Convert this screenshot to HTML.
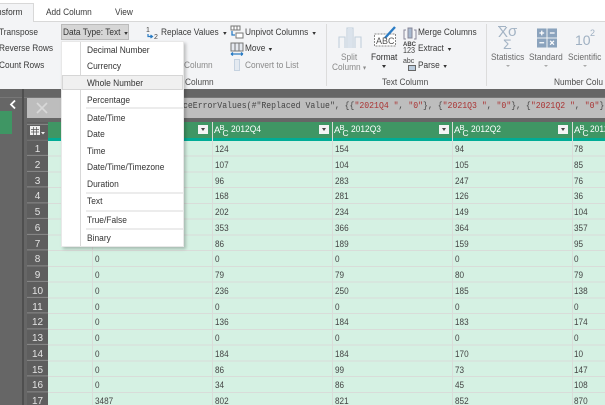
<!DOCTYPE html>
<html><head><meta charset="utf-8"><style>
html,body{margin:0;padding:0;overflow:hidden}
body{width:605px;height:405px;position:relative;background:#fff;font-family:"Liberation Sans",sans-serif;font-size:9.5px;color:#3a3a3a}
#w{position:absolute;left:0;top:0;width:605px;height:405px;overflow:hidden;filter:blur(.3px);background:#fff}
.a{position:absolute;white-space:nowrap}
.t{transform:scaleX(.875);transform-origin:left center}
.col{position:absolute;top:142px;line-height:15.75px;font-size:9.5px;color:#444;transform:scaleX(.86);transform-origin:left top}
.m{position:absolute;left:87px;font-size:9.5px;color:#333;white-space:nowrap;transform:scaleX(.885);transform-origin:left center}
.sep{position:absolute;left:86px;width:97px;height:2px;background:#ececec}
.hd{position:absolute;top:124px;color:#fff;font-size:9.5px;white-space:nowrap;transform:scaleX(.885);transform-origin:left center}
.dd{position:absolute;top:125px;width:10px;height:9px;background:#f4f4f4}
.dd:after{content:"";position:absolute;left:2.5px;top:3px;border:2.5px solid transparent;border-top:3px solid #444}
.ab{position:absolute;top:122px;width:14px;height:16px;color:#fff}
.ab i,.ab b,.ab u{position:absolute;font-style:normal;font-weight:400;text-decoration:none;line-height:10px}
.ab i{left:0;top:4px;font-size:9.5px}
.ab b{left:5.5px;top:0.5px;font-size:7.5px}
.ab u{left:8.5px;top:5.5px;font-size:8.5px}
.tri{display:inline-block;border:2.5px solid transparent;border-top:3px solid #333;margin-left:4px;vertical-align:-2px}
</style></head><body><div id="w">
<!-- ribbon -->
<div class="a" style="left:0;top:21px;width:605px;height:68px;background:#f3f4f6;border-top:1px solid #d8d8d8;box-sizing:border-box"></div>
<div class="a" style="left:0;top:3px;width:34px;height:19px;background:#f3f4f6;border:1px solid #d8d8d8;border-left:0;border-bottom:0;box-sizing:border-box"></div>
<div class="a t" style="left:-3px;top:7px;color:#333">nsform</div>
<div class="a t" style="left:46px;top:7px">Add Column</div>
<div class="a t" style="left:115px;top:7px">View</div>

<div class="a t" style="left:-1px;top:27px">Transpose</div>
<div class="a t" style="left:-1px;top:43px">Reverse Rows</div>
<div class="a t" style="left:-1px;top:60px">Count Rows</div>

<div class="a" style="left:61px;top:24px;width:68px;height:16px;background:#d6d6d6;border:1px solid #bbb;box-sizing:border-box"></div>
<div class="a t" style="left:63px;top:27px;color:#333">Data Type: Text<span class="tri"></span></div>

<svg class="a" style="left:146px;top:25px" width="14" height="15" viewBox="0 0 14 15"><text x="0" y="7" font-size="7" fill="#444" font-family="Liberation Sans">1</text><text x="8" y="14" font-size="7" fill="#444" font-family="Liberation Sans">2</text><path d="M2 9v2.5h4M4.5 10l2 1.5-2 1.5" fill="none" stroke="#2b7cc4" stroke-width="1.2"/></svg>
<div class="a t" style="left:161px;top:27px">Replace Values<span class="tri" style="margin-left:5px"></span></div>
<svg class="a" style="left:230px;top:25px" width="14" height="14" viewBox="0 0 14 14"><rect x="1" y="1" width="9" height="4" fill="#fff" stroke="#777"/><path d="M4 1v4M7 1v4" stroke="#777"/><rect x="6" y="8" width="7" height="5" fill="#fff" stroke="#777"/><path d="M2 6v4h3" fill="none" stroke="#2b7cc4" stroke-width="1.3"/></svg>
<div class="a t" style="left:245px;top:27px">Unpivot Columns<span class="tri" style="margin-left:5px"></span></div>
<svg class="a" style="left:230px;top:42px" width="14" height="14" viewBox="0 0 14 14"><path d="M1 1h4v8H1zM9 1h4v8H9zM5 1h4v8H5z" fill="#e6eaf0" stroke="#777"/><path d="M1 12h12M1 12l2-1.5M1 12l2 1.5M13 12l-2-1.5M13 12l-2 1.5" stroke="#2b7cc4" stroke-width="1.2" fill="none"/></svg>
<div class="a t" style="left:245px;top:43px">Move<span class="tri"></span></div>
<div class="a" style="left:234px;top:59px;width:6px;height:12px;border:1px solid #c5d2e0;background:#e4eaf1;box-sizing:border-box"></div>
<div class="a t" style="left:245px;top:60px;color:#8a8a8a">Convert to List</div>
<div class="a t" style="left:184px;top:60px;color:#8a8a8a">Column</div>
<div class="a t" style="left:185px;top:77px;color:#4d4d4d">Column</div>

<div class="a" style="left:326px;top:24px;width:1px;height:62px;background:#dcdcdc"></div>
<div class="a" style="left:486px;top:24px;width:1px;height:62px;background:#dcdcdc"></div>

<svg class="a" style="left:338px;top:26px" width="24" height="23" viewBox="0 0 24 23"><path d="M1 22V11h6v11M9 22V2h6v20M17 22V11h6v11" fill="none" stroke="#c2cfdc" stroke-width="1.1"/><rect x="10" y="2" width="4" height="20" fill="#dbe3ec"/></svg>
<div class="a t" style="left:341px;top:52px;color:#8a8a8a">Split</div>
<div class="a t" style="left:332px;top:62px;color:#8a8a8a">Column <span style="font-size:7px">&#9662;</span></div>

<svg class="a" style="left:373px;top:24px" width="26" height="24" viewBox="0 0 26 24"><rect x="1.5" y="10" width="21" height="12" fill="#fff" stroke="#888" stroke-dasharray="2 1"/><path d="M12 14L22 3" stroke="#2b7cc4" stroke-width="2.4"/><text x="3" y="20" font-size="9" fill="#555" font-family="Liberation Sans">ABC</text></svg>
<div class="a t" style="left:371px;top:52px;color:#2e2e2e">Format</div>
<div class="a" style="left:382px;top:65px;border:2.5px solid transparent;border-top:3px solid #333"></div>

<svg class="a" style="left:403px;top:27px" width="14" height="13" viewBox="0 0 14 13"><path d="M3 3H1v9h2M11 3h2v9h-2" fill="none" stroke="#889"/><rect x="5" y="1" width="4" height="10" fill="#a9bad0" stroke="#889"/></svg>
<div class="a t" style="left:418px;top:27px">Merge Columns</div>
<div class="a" style="left:403px;top:42px;font-size:6px;line-height:6px;color:#444;font-weight:700">ABC</div>
<div class="a" style="left:403px;top:47px;font-size:8px;line-height:8px;color:#444;transform:scaleX(.9);transform-origin:left">123</div>
<div class="a t" style="left:418px;top:43px">Extract<span class="tri"></span></div>
<div class="a" style="left:403px;top:58px;font-size:7px;line-height:7px;color:#444">abc</div>
<div class="a" style="left:408px;top:65px;width:8px;height:6px;background:#bcd;border:1px solid #666;box-sizing:border-box"></div>
<div class="a t" style="left:418px;top:60px">Parse<span class="tri"></span></div>
<div class="a t" style="left:382px;top:77px;color:#4d4d4d">Text Column</div>

<div class="a" style="left:498px;top:26px;width:8px;height:1px;background:#a3b3c4"></div>
<div class="a" style="left:498px;top:25px;font-size:15px;line-height:15px;color:#a3b3c4">X</div>
<div class="a" style="left:508px;top:24px;font-size:15px;line-height:15px;color:#a3b3c4">&#963;</div>
<div class="a" style="left:503px;top:37px;font-size:14px;line-height:14px;color:#a3b3c4">&#931;</div>
<div class="a t" style="left:491px;top:52px;color:#6a6a6a">Statistics</div>
<div class="a" style="left:506px;top:65px;border:2px solid transparent;border-top:2.5px solid #aaa"></div>
<svg class="a" style="left:537px;top:28px" width="20" height="20" viewBox="0 0 21 20"><rect x="0" y="0" width="10" height="9.5" fill="#8ba3bd"/><rect x="11" y="0" width="10" height="9.5" fill="#8ba3bd"/><rect x="0" y="10.5" width="10" height="9.5" fill="#8ba3bd"/><rect x="11" y="10.5" width="10" height="9.5" fill="#8ba3bd"/><path d="M2.5 4.7h5M5 2.2v5M13.5 4.7h5M2.5 15h5M13.8 13l4 4M17.8 13l-4 4" stroke="#fff" stroke-width="1.3"/></svg>
<div class="a t" style="left:529px;top:52px;color:#6a6a6a">Standard</div>
<div class="a" style="left:544px;top:65px;border:2px solid transparent;border-top:2.5px solid #aaa"></div>
<div class="a" style="left:575px;top:32px;font-size:14px;color:#9fb0c2">10</div>
<div class="a" style="left:590px;top:28px;font-size:9px;color:#9fb0c2">2</div>
<div class="a t" style="left:568px;top:52px;color:#6a6a6a">Scientific</div>
<div class="a" style="left:583px;top:65px;border:2px solid transparent;border-top:2.5px solid #aaa"></div>
<div class="a t" style="left:554px;top:77px;color:#4d4d4d">Number Colu</div>

<!-- dark -->
<div class="a" style="left:0;top:89px;width:605px;height:316px;background:#666"></div>
<div class="a" style="left:0;top:97px;width:605px;height:1px;background:#777"></div>
<div class="a" style="left:22px;top:89px;width:2px;height:316px;background:#4f4f4f"></div>
<div class="a" style="left:0;top:111px;width:12px;height:23px;background:#3f9664"></div>
<svg class="a" style="left:9px;top:99px" width="8" height="11" viewBox="0 0 8 11"><path d="M6 1.5L2 5.5l4 4" fill="none" stroke="#fff" stroke-width="1.8"/></svg>
<!-- formula bar -->
<div class="a" style="left:27px;top:98px;width:578px;height:20px;background:#bdbdbd"></div>
<svg class="a" style="left:36px;top:102px" width="12" height="12" viewBox="0 0 12 12"><path d="M1 1l10 10M11 1L1 11" stroke="#d8d8d8" stroke-width="1.6"/></svg>
<div class="a" style="left:183px;top:98px;width:422px;height:20px;overflow:hidden"><div class="a" style="left:0;top:3px;font-family:'Liberation Mono',monospace;font-size:9px;color:#444;transform:scaleX(.907);transform-origin:left center">ceErrorValues(#"Replaced Value", {{<span style="color:#a33">"2021Q4 "</span>, <span style="color:#a33">"0"</span>}, {<span style="color:#a33">"2021Q3 "</span>, <span style="color:#a33">"0"</span>}, {<span style="color:#a33">"2021Q2 "</span>, <span style="color:#a33">"0"</span>}</div></div>

<!-- grid -->
<div class="a" style="left:27px;top:122px;width:21px;height:283px;background:#5e5e5e;background-image:repeating-linear-gradient(to bottom,transparent 0,transparent 14.75px,#8a8a8a 14.75px,#8a8a8a 15.75px);background-position:0 18.4px"></div>
<svg class="a" style="left:30px;top:126px" width="16" height="10" viewBox="0 0 16 10"><rect x=".5" y=".5" width="9" height="8" fill="#eee" stroke="#eee"/><path d="M1 3.5h8M1 6h8M3.5 1v8M6.5 1v8" stroke="#555" stroke-width=".7"/><path d="M11 6h4L13 8.5z" fill="#eee"/></svg>
<div class="a" style="left:27px;top:142px;width:21px;text-align:center;line-height:15.75px;color:#e4e4e4;font-size:10px;white-space:normal">1<br>2<br>3<br>4<br>5<br>6<br>7<br>8<br>9<br>10<br>11<br>12<br>13<br>14<br>15<br>16<br>17</div>

<div class="a" style="left:48px;top:122px;width:557px;height:16px;background:#3f9664"></div>
<div class="a" style="left:48px;top:138px;width:557px;height:3px;background:#00ac96"></div>
<div class="a" style="left:48px;top:141px;width:557px;height:264px;background-color:#d5f1e3;background-image:repeating-linear-gradient(to bottom,transparent 0,transparent 14.75px,#d9dcd9 14.75px,#d9dcd9 15.75px)"></div>
<div class="a" style="left:92px;top:141px;width:1px;height:264px;background:#d9dcd9"></div>
<div class="a" style="left:212px;top:122px;width:1px;height:283px;background:#d9dcd9"></div>
<div class="a" style="left:332px;top:122px;width:1px;height:283px;background:#d9dcd9"></div>
<div class="a" style="left:452px;top:122px;width:1px;height:283px;background:#d9dcd9"></div>
<div class="a" style="left:572px;top:122px;width:1px;height:283px;background:#d9dcd9"></div>

<div class="dd" style="left:198px"></div><div class="dd" style="left:319px"></div><div class="dd" style="left:439px"></div><div class="dd" style="left:558px"></div>
<div class="ab" style="left:214px"><i>A</i><b>B</b><u>C</u></div><div class="hd" style="left:231px">2012Q4</div>
<div class="ab" style="left:334px"><i>A</i><b>B</b><u>C</u></div><div class="hd" style="left:351px">2012Q3</div>
<div class="ab" style="left:454px"><i>A</i><b>B</b><u>C</u></div><div class="hd" style="left:471px">2012Q2</div>
<div class="ab" style="left:574px"><i>A</i><b>B</b><u>C</u></div><div class="hd" style="left:590px">2012</div>

<div class="col" style="left:95px"><br><br><br><br><br><br><br>0<br>0<br>0<br>0<br>0<br>0<br>0<br>0<br>0<br>3487</div>
<div class="col" style="left:215px">124<br>107<br>96<br>168<br>202<br>353<br>86<br>0<br>79<br>236<br>0<br>136<br>0<br>184<br>86<br>34<br>802</div>
<div class="col" style="left:335px">154<br>104<br>283<br>281<br>234<br>366<br>189<br>0<br>79<br>250<br>0<br>184<br>0<br>184<br>99<br>86<br>821</div>
<div class="col" style="left:455px">94<br>105<br>247<br>126<br>149<br>364<br>159<br>0<br>80<br>185<br>0<br>183<br>0<br>170<br>73<br>45<br>852</div>
<div class="col" style="left:574px">78<br>85<br>76<br>36<br>104<br>357<br>95<br>0<br>79<br>138<br>0<br>174<br>0<br>10<br>147<br>108<br>870</div>

<!-- menu -->
<div class="a" style="left:61px;top:41px;width:123px;height:206px;background:#fff;box-shadow:2px 2px 3px rgba(0,0,0,.22);border:1px solid #e8e8e8;box-sizing:border-box"></div>
<div class="a" style="left:80px;top:42px;width:1px;height:204px;background:#d8d8d8"></div>
<div class="a" style="left:62px;top:75px;width:121px;height:15px;background:#f0f0f0;border:1px solid #d6d6d6;box-sizing:border-box"></div>
<div class="m" style="top:44.5px">Decimal Number</div>
<div class="m" style="top:61px">Currency</div>
<div class="m" style="top:78px">Whole Number</div>
<div class="m" style="top:94.5px">Percentage</div>
<div class="sep" style="top:107px"></div>
<div class="m" style="top:112.5px">Date/Time</div>
<div class="m" style="top:129px">Date</div>
<div class="m" style="top:145.5px">Time</div>
<div class="m" style="top:162px">Date/Time/Timezone</div>
<div class="m" style="top:178.5px">Duration</div>
<div class="sep" style="top:191.5px"></div>
<div class="m" style="top:196px">Text</div>
<div class="sep" style="top:209.5px"></div>
<div class="m" style="top:214.5px">True/False</div>
<div class="sep" style="top:227.5px"></div>
<div class="m" style="top:232.5px">Binary</div>
</div></body></html>
